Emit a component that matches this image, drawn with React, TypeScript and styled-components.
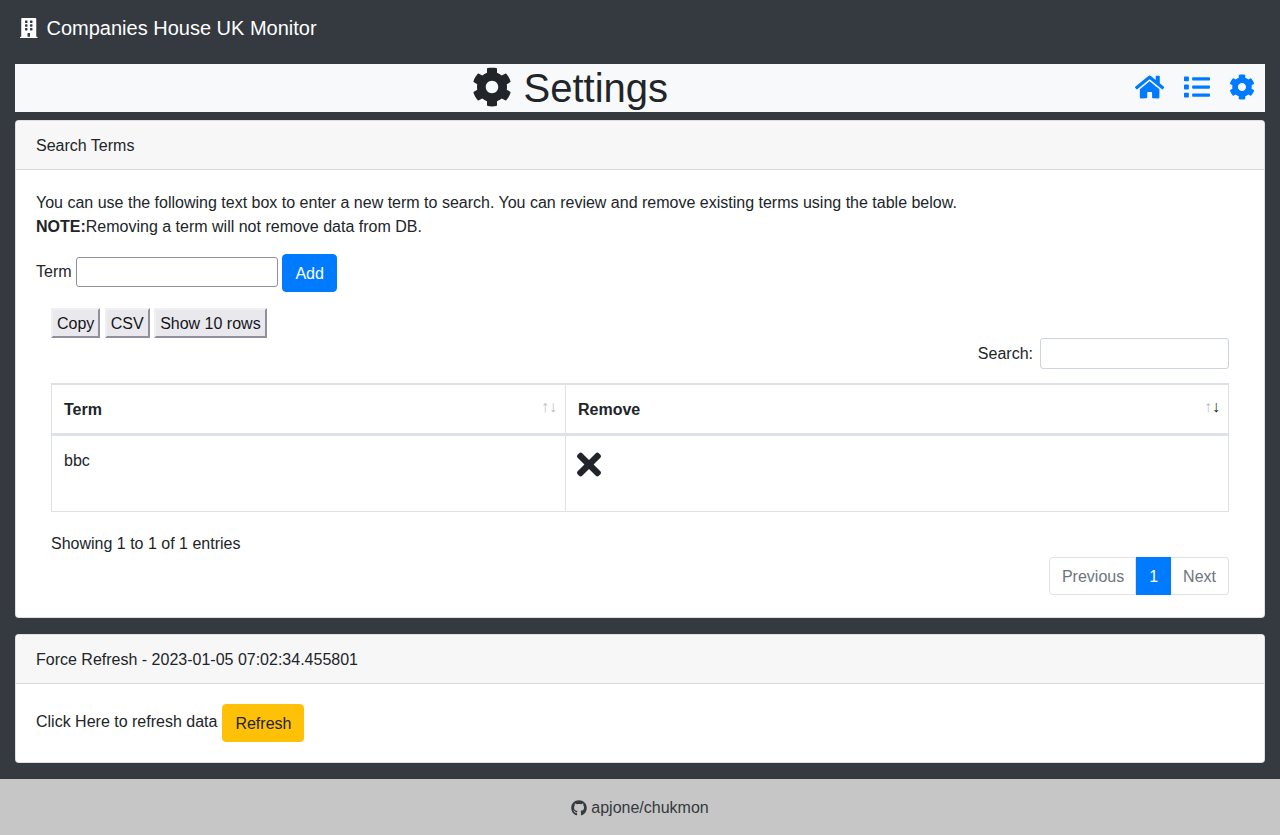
import styled, { createGlobalStyle } from 'styled-components';
import { FaBuilding, FaCog, FaGithub, FaHome, FaList, FaTimes } from 'react-icons/fa';

const GlobalStyle = createGlobalStyle`
  * {
    box-sizing: border-box;
  }

  body {
    margin: 0;
    background: #343a40;
    color: #212529;
    font-family: "Liberation Sans", Arial, sans-serif;
    font-size: 16px;
    line-height: 24px;
  }
`;

const Navbar = styled.nav`
  height: 56px;
  display: flex;
  align-items: center;
  padding: 0 20px;
  color: #fff;
  font-size: 20px;
`;

const Brand = styled.span`
  display: flex;
  align-items: center;
  gap: 9px;

  svg {
    width: 17.5px;
    height: 20px;
    margin-top: -1px;
  }
`;

const Main = styled.main`
  padding: 8px 15px 16px;
  display: flex;
  flex-direction: column;
  gap: 16px;
`;

const HeaderBar = styled.header`
  height: 48px;
  margin-bottom: -8px;
  display: flex;
  background: #f8f9fa;
`;

const Title = styled.h1`
  flex: 1;
  margin: 0;
  display: flex;
  justify-content: center;
  align-items: center;
  gap: 10.5px;
  font-size: 40px;
  font-weight: 400;
  line-height: 48px;

  svg {
    width: 40px;
    height: 40px;
    margin: -3px 1px 0 -1px;
  }
`;

const IconNav = styled.div`
  width: 139px;
  padding: 0 10px 0 9px;
  display: flex;
  justify-content: space-between;
  align-items: center;
  color: #007bff;
  margin-top: -3px;

  svg {
    width: 26px;
    height: 26px;
    display: block;
  }
`;

const HomeIcon = styled(FaHome)`
  && {
    width: 29.25px;
  }
`;

const Card = styled.section`
  background: #fff;
  border: 1px solid rgba(0, 0, 0, 0.125);
  border-radius: 4px;
`;

const CardHeader = styled.div`
  height: 49px;
  padding: 13px 20px 11px;
  background: #f7f7f7;
  border-bottom: 1px solid rgba(0, 0, 0, 0.125);
  border-radius: 3px 3px 0 0;
`;

const CardBody = styled.div`
  padding: 20px;
`;

const Intro = styled.p`
  margin: 0 0 15px;
  padding-top: 1px;
`;

const TermForm = styled.form`
  display: flex;
  align-items: flex-start;
  gap: 4.45px;
`;

const FieldLabel = styled.label`
  padding-top: 6px;
`;

const TermInput = styled.input`
  width: 202px;
  height: 30px;
  margin-top: 3px;
  padding: 1px 2px;
  border: 1px solid #8f8f9d;
  border-radius: 3px;
  background: #fff;
`;

const Button = styled.button<{ $bg: string; $fg: string }>`
  height: 38px;
  padding: 7px 12px 5px;
  border: 1px solid ${({ $bg }) => $bg};
  border-radius: 4px;
  background: ${({ $bg }) => $bg};
  color: ${({ $fg }) => $fg};
  font: inherit;
`;

const TableWrapper = styled.div`
  padding: 16px 15px 0;
`;

const ExportRow = styled.div`
  display: flex;
  gap: 4.45px;
`;

const ExportButton = styled.button`
  height: 30px;
  padding: 1px 4px 0;
  border: 2px solid;
  border-color: #f0f0f4 #8f8f9d #8f8f9d #f0f0f4;
  background: #e9e9ed;
  color: #15141a;
  font: inherit;
`;

const SearchRow = styled.div`
  display: flex;
  justify-content: flex-end;
  align-items: center;
  gap: 7px;
  height: 31px;
`;

const SearchInput = styled.input`
  width: 189px;
  height: 31px;
  border: 1px solid #ced4da;
  border-radius: 3px;
  background: #fff;
`;

const Table = styled.table`
  width: 100%;
  margin-top: 14px;
  border-collapse: collapse;
  table-layout: fixed;
  border: 1px solid #dee2e6;
  border-top: 2px solid #dee2e6;
`;

const HeadCell = styled.th<{ $width?: number }>`
  position: relative;
  width: ${({ $width }) => ($width ? `${$width}px` : 'auto')};
  height: 50px;
  padding: 13px 12px 11px;
  border: 1px solid #dee2e6;
  border-top: 0;
  border-bottom: 3px solid #dee2e6;
  text-align: left;
  font-weight: 700;
`;

const SortArrows = styled.span`
  position: absolute;
  top: 10px;
  right: 8px;
  display: flex;
  font-size: 16px;
  line-height: 24px;
  font-weight: 400;
`;

const Arrow = styled.span<{ $active?: boolean }>`
  width: 8px;
  display: flex;
  justify-content: center;
  color: #212529;
  opacity: ${({ $active }) => ($active ? 1 : 0.3)};
`;

const BodyCell = styled.td`
  height: 77px;
  padding: 13px 12px 11px;
  border: 1px solid #dee2e6;
  vertical-align: top;

  svg {
    width: 24px;
    height: 35px;
    display: block;
    margin: -2px 0 0 -1px;
  }
`;

const Info = styled.div`
  margin-top: 20px;
`;

const Pagination = styled.div`
  display: flex;
  justify-content: flex-end;
  margin: 1px 0 2px;
`;

const PageLink = styled.a<{ $active?: boolean; $first?: boolean; $last?: boolean }>`
  height: 38px;
  padding: 8px ${({ $first }) => ($first ? 11 : 12)}px 6px 12px;
  border: 1px solid ${({ $active }) => ($active ? '#007bff' : '#dee2e6')};
  border-left-width: ${({ $first, $active }) => ($first || $active ? 1 : 0)}px;
  border-radius: ${({ $first, $last }) =>
    $first ? '4px 0 0 4px' : $last ? '0 4px 4px 0' : '0'};
  background: ${({ $active }) => ($active ? '#007bff' : '#fff')};
  color: ${({ $active }) => ($active ? '#fff' : '#6c757d')};
  line-height: 22px;
`;

const RefreshRow = styled.div`
  display: flex;
  align-items: flex-start;
  gap: 5px;

  span {
    line-height: 36px;
  }
`;

const Footer = styled.footer`
  height: 56px;
  padding-top: 2px;
  display: flex;
  justify-content: center;
  align-items: center;
  gap: 4px;
  background: #c6c6c6;
  color: #343a40;

  svg {
    width: 16px;
    height: 16px;
  }
`;

export default function App() {
  return (
    <>
      <GlobalStyle />
      <Navbar>
        <Brand>
          <FaBuilding />
          Companies House UK Monitor
        </Brand>
      </Navbar>
      <Main>
        <HeaderBar>
          <Title>
            <FaCog />
            Settings
          </Title>
          <IconNav>
            <HomeIcon />
            <FaList />
            <FaCog />
          </IconNav>
        </HeaderBar>
        <Card>
          <CardHeader>Search Terms</CardHeader>
          <CardBody>
            <Intro>
              You can use the following text box to enter a new term to search. You can review and remove existing terms using the table below.
              <br />
              <b>NOTE:</b>Removing a term will not remove data from DB.
            </Intro>
            <TermForm>
              <FieldLabel htmlFor="term">Term</FieldLabel>
              <TermInput id="term" type="text" />
              <Button type="button" $bg="#007bff" $fg="#fff">Add</Button>
            </TermForm>
            <TableWrapper>
              <ExportRow>
                <ExportButton type="button">Copy</ExportButton>
                <ExportButton type="button">CSV</ExportButton>
                <ExportButton type="button">Show 10 rows</ExportButton>
              </ExportRow>
              <SearchRow>
                Search:
                <SearchInput type="search" />
              </SearchRow>
              <Table>
                <thead>
                  <tr>
                    <HeadCell $width={514}>
                      Term
                      <SortArrows>
                        <Arrow>↑</Arrow>
                        <Arrow>↓</Arrow>
                      </SortArrows>
                    </HeadCell>
                    <HeadCell>
                      Remove
                      <SortArrows>
                        <Arrow>↑</Arrow>
                        <Arrow $active>↓</Arrow>
                      </SortArrows>
                    </HeadCell>
                  </tr>
                </thead>
                <tbody>
                  <tr>
                    <BodyCell>bbc</BodyCell>
                    <BodyCell>
                      <FaTimes />
                    </BodyCell>
                  </tr>
                </tbody>
              </Table>
              <Info>Showing 1 to 1 of 1 entries</Info>
              <Pagination>
                <PageLink $first>Previous</PageLink>
                <PageLink $active>1</PageLink>
                <PageLink $last>Next</PageLink>
              </Pagination>
            </TableWrapper>
          </CardBody>
        </Card>
        <Card>
          <CardHeader>Force Refresh - 2023-01-05 07:02:34.455801</CardHeader>
          <CardBody>
            <RefreshRow>
              <span>Click Here to refresh data</span>
              <Button type="button" $bg="#ffc107" $fg="#212529">Refresh</Button>
            </RefreshRow>
          </CardBody>
        </Card>
      </Main>
      <Footer>
        <FaGithub />
        apjone/chukmon
      </Footer>
    </>
  );
}
